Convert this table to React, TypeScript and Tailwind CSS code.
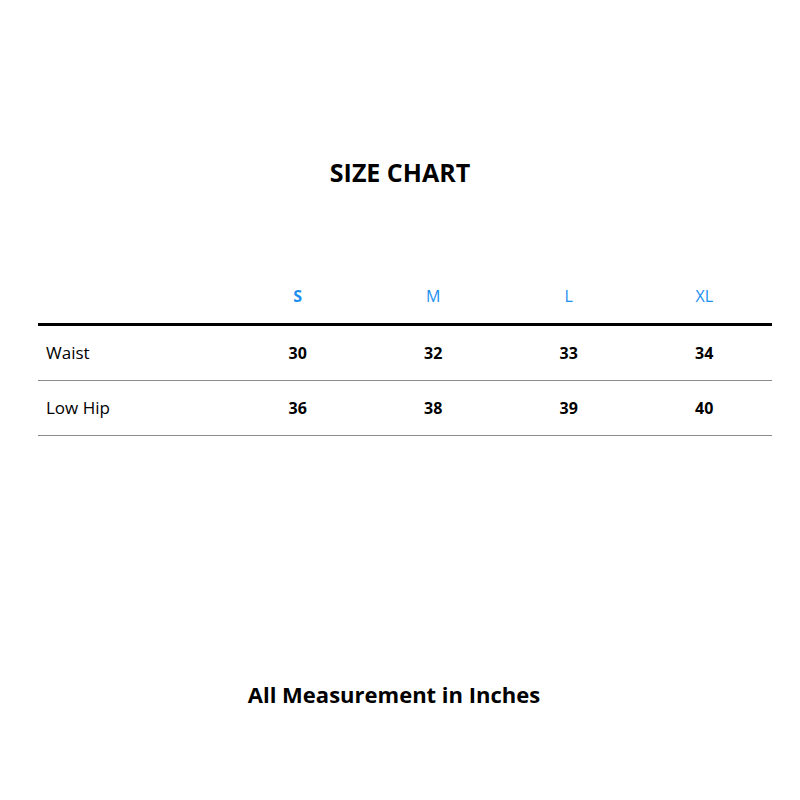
const sizes = ["S", "M", "L", "XL"];

const rows = [
  { label: "Waist", values: ["30", "32", "33", "34"] },
  { label: "Low Hip", values: ["36", "38", "39", "40"] },
];

export default function App() {
  return (
    <div className="w-[800px] h-[800px] bg-white flex flex-col font-['Open_Sans',sans-serif] text-black">
      <h1 className="pt-[156px] h-[189px] text-center text-[25px] leading-[33px] font-bold">
        SIZE CHART
      </h1>

      <div className="ml-[38px] w-[734px] mt-[79px]">
        <div className="grid grid-cols-[192px_repeat(4,1fr)] h-[58px] items-center border-b-[3px] border-black">
          <div />
          {sizes.map((s, i) => (
            <div
              key={s}
              className={`text-center text-[16px] text-[#1b8ff0] ${i === 0 ? "font-bold" : ""}`}
            >
              {s}
            </div>
          ))}
        </div>

        {rows.map((row) => (
          <div
            key={row.label}
            className="grid grid-cols-[192px_repeat(4,1fr)] h-[55px] items-center border-b border-[#8c8c8c]"
          >
            <div className="pl-[8px] text-[17px]">{row.label}</div>
            {row.values.map((v, i) => (
              <div key={i} className="text-center text-[16px] font-bold">
                {v}
              </div>
            ))}
          </div>
        ))}
      </div>

      <p className="mt-auto mb-[91px] mr-[12px] text-center text-[22px] leading-[30px] font-bold">
        All Measurement in Inches
      </p>
    </div>
  );
}
